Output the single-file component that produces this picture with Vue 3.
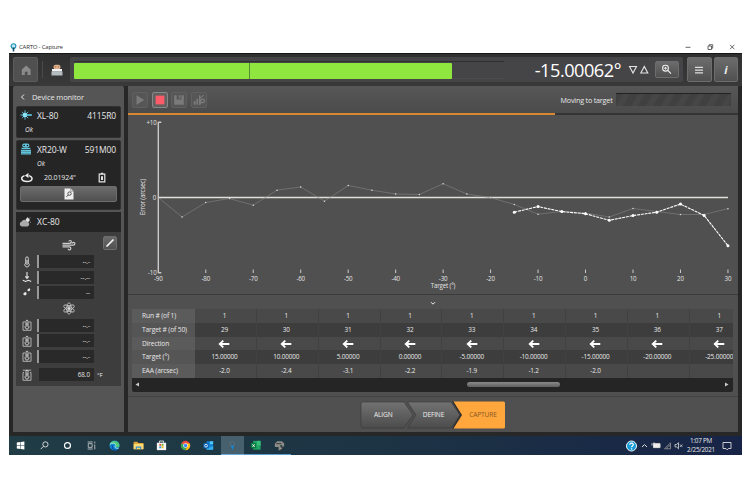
<template>
  <div class="screen">
    <!-- Window title bar -->
    <div class="titlebar">
      <svg class="pin" viewBox="0 0 8 10">
        <circle cx="4" cy="3.4" r="2.7" fill="#bfe9f5" stroke="#1b91b5" stroke-width="1.3" />
        <path d="M4 5v4.5" stroke="#164d66" stroke-width="1.8" />
      </svg>
      <span>CARTO - Capture</span>
      <svg class="win-controls" viewBox="0 0 60 12">
        <path d="M3.500 6.300h5M26 5h3.500v3.500H26zM27.200 5V3.700h3.500v3.500h-1.200M48 3.800l4.400 4.400M52.400 3.800L48 8.200" />
      </svg>
    </div>

    <div class="app">
      <!-- Header -->
      <div class="header">
        <div class="btn home">
          <svg viewBox="0 0 24 24"><path d="M7.800 11.500l4.400-4 4.400 4v5.600h-3v-3.400h-2.800v3.400h-3z" fill="#8a8a8a" /></svg>
        </div>
        <div class="divider"></div>
        <svg class="device-icon" viewBox="0 0 12 12">
          <rect x="2.500" y=".8" width="7" height="4.400" rx="2" fill="#dfb08a" />
          <circle cx="4.500" cy="2.800" r=".8" fill="#a57c60" />
          <circle cx="7.500" cy="2.800" r=".8" fill="#a57c60" />
          <rect x="1" y="5" width="10" height="2.600" fill="#f2f2f2" />
          <rect x=".5" y="7.500" width="11" height="4" fill="#b4bcc0" />
        </svg>
        <div class="signal">
          <div class="track">
            <div class="level"><i></i></div>
          </div>
          <span class="reading">-15.00062°</span>
          <svg class="triangles" viewBox="0 0 22 10">
            <path d="M1.500 1.500h7L5 8zM12.800 8h7L16.300 1.500z" />
          </svg>
          <div class="btn search">
            <svg viewBox="0 0 23 17">
              <circle cx="10.500" cy="7.200" r="2.900" />
              <path d="M12.800 9.500l3.200 3.200M9.200 7.200h2.600M10.500 5.900v2.600" />
            </svg>
          </div>
        </div>
        <div class="btn menu"><svg viewBox="0 0 24 24"><path d="M8 9.300h8M8 12.100h8M8 14.900h8" stroke="#ddd" stroke-width="1.300" /></svg></div>
        <div class="btn info">i</div>
      </div>

      <div class="body">
        <!-- Device monitor -->
        <aside class="sidebar">
          <div class="side-title">
            <svg viewBox="0 0 5 8"><path d="M4 1.500L1.500 4 4 6.500" /></svg>
            <span>Device monitor</span>
          </div>

          <div class="card laser">
            <div class="card-row">
              <svg viewBox="0 0 12 12">
                <path d="M5 1.300v9.400M.4 6h11M1.900 2.800l6.300 6.400M8.200 2.800L1.900 9.200" stroke="#5fcbe4" stroke-width=".9" />
                <circle cx="5" cy="6" r="2.300" fill="#8ee4f5" />
                <path d="M6 6h6" stroke="#5fcbe4" stroke-width="1.300" />
              </svg>
              <b>XL-80</b><b class="serial">4115R0</b>
            </div>
            <em>Ok</em>
          </div>

          <div class="card rotary">
            <div class="card-row">
              <svg viewBox="0 0 12 12">
                <rect x="2.200" y=".6" width="7.200" height="3.800" rx="1.800" fill="#60c5dc" />
                <circle cx="4.200" cy="2.500" r=".8" fill="#222" /><circle cx="7.500" cy="2.500" r=".8" fill="#222" />
                <path d="M1.500 5.400h8.800M1 7.500h10M1 9.200h10M1 10.900h10" stroke="#60c5dc" stroke-width="1.400" />
              </svg>
              <b>XR20-W</b><b class="serial">591M00</b>
            </div>
            <em>Ok</em>
            <div class="angle">
              <svg viewBox="0 0 12 10"><path d="M3.500 2.600C-.8 4-.2 8.500 6 8.500S12.300 4 8 2.600" fill="none" stroke="#eee" stroke-width="1.500" /><path d="M7.500 0v5L3.800 2.500z" fill="#eee" /></svg>
              <span>20.01924"</span>
              <svg class="battery" viewBox="0 0 8 11"><path d="M1.200 2.200h5.600v7.700H1.200zM2.800 1.300h2.400" fill="none" stroke="#e5e5e5" stroke-width="1.200" /><path d="M3 4.200h2v3.800H3z" fill="#e5e5e5" /></svg>
            </div>
            <div class="btn detail">
              <svg viewBox="0 0 10 12"><path d="M.5.500h6.200l2.800 2.800v8.200h-9z" fill="#efefef" /><path d="M6.700.5v2.800h2.800" stroke="#777" stroke-width=".6" fill="none" /><circle cx="5.500" cy="5.600" r="1.700" fill="none" stroke="#444" stroke-width=".9" /><path d="M4.400 6.800L2.500 8.800" stroke="#444" /></svg>
            </div>
          </div>

          <div class="env">
            <div class="env-title">
              <svg viewBox="0 0 12 10"><circle cx="8.700" cy="3" r="2" fill="#e5e5e5" /><path d="M11.200.5l-.8.800M11 5l.8.500M8.500 0v.8" stroke="#ddd" stroke-width=".7" /><path d="M3 9.500a2.600 2.600 0 0 1-.3-5.100 3 3 0 0 1 5.500.4A2.400 2.400 0 0 1 8.500 9.500z" fill="#aaa" /></svg>
              <b>XC-80</b>
            </div>
            <div class="env-body">
              <div class="air">
                <svg viewBox="0 0 14 12" fill="none" stroke="#ccc">
                  <path d="M.5 4.300h7.300c2 0 2-2.800.3-2.800-.8 0-1.200.5-1.200 1.100M.5 6.100h10.700c2.200 0 2.200-2.800.2-2.800-.9 0-1.200.5-1.200 1.100M.5 7.900h6.800c2 0 2 2.900.2 2.900-.8 0-1.200-.5-1.200-1.100" stroke-width="1.200" />
                </svg>
                <div class="btn edit"><svg viewBox="0 0 14 12"><path d="M3.500 9.500l7-7" stroke="#f5f5f5" stroke-width="1.700" /></svg></div>
              </div>
              <div v-for="s in airSensors" :key="s.icon" class="sensor">
                <svg viewBox="0 0 10 12">
                  <g v-if="s.icon === 'temp'" fill="none" stroke="#ccc"><path d="M3.700 7V2.200a1.300 1.300 0 0 1 2.600 0V7a2.200 2.200 0 1 1-2.600 0z" stroke-width="1" /><path d="M5 4v5" stroke-width="1.200" /></g>
                  <g v-else-if="s.icon === 'press'" fill="none" stroke="#e4e4e4"><path d="M5 1v6M3.300 5.300L5 7.300l1.700-2M.8 9.400c1.500 0 1.500 1 2.800 1s1.500-1 2.800-1 1.500 1 2.800 1" stroke-width="1.100" /></g>
                  <g v-else fill="#e6e6e6"><path d="M7.800 2.200c1.200 2.200-.5 3.500-1.800 2.800-1.400-1 0-2.500 1.800-2.800zM4 5.900c1.600 2.500-.4 4-1.900 3.200C.4 8 1.900 6.200 4 5.900z" /></g>
                </svg>
                <div class="value marked">{{ s.value }}</div>
              </div>
              <div class="material">
                <svg viewBox="0 0 14 13" fill="none" stroke="#ccc" stroke-width=".8">
                  <ellipse cx="7" cy="6.500" rx="2.300" ry="5.700" />
                  <ellipse cx="7" cy="6.500" rx="2.300" ry="5.900" transform="rotate(60 7 6.500)" />
                  <ellipse cx="7" cy="6.500" rx="2.300" ry="5.900" transform="rotate(-60 7 6.500)" />
                  <circle cx="7" cy="6.500" r="1.300" fill="#ddd" />
                </svg>
              </div>
              <div v-for="n in 4" :key="n" class="sensor" :class="{ last: n === 4 }">
                <svg viewBox="0 0 10 12" fill="none" stroke="#bbb">
                  <path v-if="n < 4" d="M3 3H1v8.300h8V3H7" stroke-width=".9" />
                  <path v-else d="M.8 1.200h8.400M2 3.500H1v7.800h8V3.500H8" stroke-width=".9" />
                  <path d="M4 6.500V2.200a1 1 0 0 1 2 0v4.300a1.900 1.900 0 1 1-2 0z" stroke="#ddd" stroke-width=".9" />
                  <path d="M5 4v4" stroke="#ddd" stroke-width=".8" />
                </svg>
                <div class="value" :class="{ marked: n < 4 }">{{ n < 4 ? '--.-' : '68.0' }}</div>
                <span v-if="n === 4" class="unit">°F</span>
              </div>
            </div>
          </div>
        </aside>

        <!-- Capture area -->
        <main class="main">
          <div class="toolbar">
            <div class="tool"><svg viewBox="0 0 16 16"><path d="M4 2.500v11L13 8z" fill="#7a7a7a" /></svg></div>
            <div class="tool stop"><svg viewBox="0 0 16 16"><rect x="3" y="3" width="10" height="10" fill="#ff5c69" /></svg></div>
            <div class="tool"><svg viewBox="0 0 16 16"><path d="M2.500 2.500h2.800v5h5.400v-5h2.800v11h-11z" fill="#7a7a7a" /><path d="M7.800 2.500h1.800v3.600H7.800z" fill="#7a7a7a" /></svg></div>
            <div class="tool"><svg viewBox="0 0 16 16"><path d="M2 9h2v4.500H2zM5 6.500h2v7H5zM8 2.500h1.500v11H8z" fill="#7a7a7a" /><circle cx="12" cy="9" r="2.100" fill="none" stroke="#858585" stroke-width="1.300" /><path d="M10.600 10.700l-1.800 2.800M9 5.500l4.500-3" stroke="#858585" /></svg></div>
            <span class="state">Moving to target</span>
            <div class="busy"></div>
          </div>
          <div class="progress"><div :style="{ width: progress + '%' }"></div></div>

          <svg class="chart" viewBox="128 115 610 179">
            <g class="ticks">
              <path v-for="t in ticks" :key="t" :d="`M${xPos(t)} 269.500v3.500`" />
            </g>
            <path d="M158.300 122v151M158.300 122.300h3M158.300 272.700h3" class="axis" />
            <path d="M158 197.500h570" class="zero" />
            <polyline :points="toPoints(previous)" class="previous" />
            <circle v-for="(p, i) in previous.slice(1)" :key="'p' + i" :cx="xPos(p[0])" :cy="p[1]" r=".75" fill="#ddd" />
            <polyline :points="toPoints(current)" class="current" />
            <circle v-for="p in current" :key="'c' + p[0]" :cx="xPos(p[0])" :cy="p[1]" r="1.500" fill="#fff" />
            <g class="labels">
              <text v-for="t in [-90, ...ticks]" :key="t" :x="xPos(t)" y="281.300" text-anchor="middle">{{ t }}</text>
              <text x="156.500" y="124.600" text-anchor="end">+10</text>
              <text x="156" y="199.900" text-anchor="end">0</text>
              <text x="156.500" y="275.400" text-anchor="end">-10</text>
              <text x="443" y="287.900" text-anchor="middle">Target (°)</text>
              <text transform="translate(145 197) rotate(-90)" text-anchor="middle">Error (arcsec)</text>
            </g>
          </svg>

          <div class="results">
            <div class="collapse"><svg viewBox="0 0 6 5"><path d="M1 1.200l2 2 2-2" /></svg></div>
            <div class="table">
              <div v-for="row in rows" :key="row.label" class="row">
                <div class="label">{{ row.label }}</div>
                <div v-for="(cell, i) in row.cells" :key="i" class="cell">
                  <svg v-if="cell === 'left'" viewBox="0 0 12 8"><path d="M11.300 4H2M5.300.6L1.700 4l3.600 3.400" /></svg>
                  <template v-else>{{ cell }}</template>
                </div>
              </div>
            </div>
            <div class="scrollbar">
              <svg viewBox="0 0 4 5"><path d="M4 .5v4L.5 2.500z" /></svg>
              <div class="thumb"></div>
              <svg viewBox="0 0 4 5"><path d="M0 .5v4l3.500-2z" /></svg>
            </div>
          </div>

          <div class="steps">
            <svg viewBox="0 0 146 28">
              <defs>
                <linearGradient id="stepFill" x1="0" y1="0" x2="0" y2="1">
                  <stop offset="0" stop-color="#727272" /><stop offset="1" stop-color="#4c4c4c" />
                </linearGradient>
              </defs>
              <path d="M3 1h41l9 13-9 13H3a2 2 0 0 1-2-2V3a2 2 0 0 1 2-2z" fill="url(#stepFill)" stroke="#383838" stroke-width=".6" />
              <path d="M47.500 1H91l9 13-9 13H47.500l8.500-13z" fill="url(#stepFill)" stroke="#383838" stroke-width=".6" />
              <path d="M92 .500h2l9 13.500-9 13.500h-2l8-13.500z" fill="#303030" />
              <path d="M93.500.500h50a1.500 1.500 0 0 1 1.500 1.500v24a1.500 1.500 0 0 1-1.500 1.500h-50l8.500-13.500z" fill="#ffa63c" />
              <text x="23.300" y="16.400">ALIGN</text>
              <text x="73.500" y="16.400">DEFINE</text>
              <text x="123" y="16.400" class="on">CAPTURE</text>
            </svg>
          </div>
        </main>
      </div>
    </div>

    <!-- Windows taskbar -->
    <div class="taskbar">
      <div class="task"><svg viewBox="0 0 14 14"><path d="M3 3.700l3.700-.5v3.500H3zM7.200 3.100l4-.5v4.100h-4zM3 7.200h3.700v3.500L3 10.200zM7.200 7.200h4v4.100l-4-.5z" fill="#fff" /></svg></div>
      <div class="task"><svg viewBox="0 0 14 14" fill="none" stroke="#ddd" stroke-width="1"><circle cx="8" cy="5.800" r="2.800" /><path d="M6 7.800L3 10.900" /></svg></div>
      <div class="task"><svg viewBox="0 0 14 14"><circle cx="7" cy="7" r="3.200" fill="none" stroke="#fff" stroke-width="1.300" /></svg></div>
      <div class="task"><svg viewBox="0 0 14 14" fill="none" stroke="#ccc" stroke-width=".9"><path d="M3.500 5h4.200v4H3.500zM2.800 3.200h5.500M2.800 10.800h5.500M10.500 2.800v2M10.500 6v5.200" /></svg></div>
      <div class="task"><svg viewBox="0 0 14 14"><circle cx="7" cy="7" r="5.400" fill="#1687d2" /><path d="M1.700 6.500A5.400 5.400 0 0 1 12.400 7.500c-.3 2-3.900 2-4.400.5.900-1.500-.5-3-2.400-3S2.500 5.400 1.700 6.500z" fill="#4fc977" /><path d="M2.300 5.800C4 3.900 8 4 8.500 7L7.300 8.500C8 10 10 10.500 11.500 10" fill="none" stroke="#b7efff" stroke-width=".8" /><path d="M4.700 7c-.5 3 1.500 5 4.300 5" fill="none" stroke="#0b50a5" stroke-width="1.500" /></svg></div>
      <div class="task"><svg viewBox="0 0 14 14"><path d="M1.800 3h4l1 1.200h5.500V11H1.800z" fill="#dca134" /><path d="M1.800 5.200h10.500V11H1.800z" fill="#ffdc72" /><path d="M4 8h6v3H8.700V9.300H5.300V11H4z" fill="#3d8fc9" /></svg></div>
      <div class="task"><svg viewBox="0 0 14 14"><path d="M4.800 4V2.200h4.400V4" fill="none" stroke="#eee" /><path d="M2 4h10v8H2z" fill="#f7f7f7" /><path d="M4.700 5.300h2v2h-2z" fill="#e94f2e" /><path d="M7.200 5.300h2v2h-2z" fill="#70b52b" /><path d="M4.700 7.900h2v2h-2z" fill="#259de0" /><path d="M7.200 7.900h2v2h-2z" fill="#f6b719" /></svg></div>
      <div class="task"><svg viewBox="0 0 14 14"><circle cx="7" cy="7" r="5" fill="#e94a3c" /><path d="M2.700 4.500A5 5 0 0 0 7 12l2.300-4.400L7 7z" fill="#35a853" /><path d="M7 12a5 5 0 0 0 4.500-7.200H7L9.300 8z" fill="#fbc116" /><circle cx="7" cy="7" r="2.500" fill="#fff" /><circle cx="7" cy="7" r="1.900" fill="#4285f4" /></svg></div>
      <div class="task"><svg viewBox="0 0 14 14"><path d="M5 2.500h7v9H5z" fill="#1483d6" /><path d="M8.500 2.500H12v3H8.500z" fill="#50c7f5" /><path d="M5 7.500l3.500 2L12 7.500v4H5z" fill="#35b2ee" /><path d="M1.500 4.300h5.800v5.800H1.500z" fill="#0862b4" /><circle cx="4.400" cy="7.200" r="1.500" fill="none" stroke="#fff" stroke-width=".9" /></svg></div>
      <div class="task active"><svg viewBox="0 0 14 14"><circle cx="7" cy="5" r="2.300" fill="#465e6c" stroke="#607987" stroke-width=".7" /><path d="M5.200 7.200h3.600L7 12z" fill="#1387d4" /></svg></div>
      <div class="task open"><svg viewBox="0 0 14 14"><path d="M4.500 2h8v9.500h-8z" fill="#20a464" /><path d="M8.500 2h4v5h-4z" fill="#38bd79" /><path d="M2 4.200h5.800V10H2z" fill="#087a40" /><path d="M3.700 5.600l2.400 3M6.100 5.600l-2.400 3" stroke="#fff" stroke-width=".9" /></svg></div>
      <div class="task open"><svg viewBox="0 0 14 14"><path d="M2 5l2.500-2.500h5L12 4.500V8H9.500V6.500H8V12H6V8.500H2z" fill="#8b8b88" /><path d="M3.500 5h5.500M9.500 9.500h2" stroke="#363636" stroke-width="1" /><circle cx="8.500" cy="10" r="1" fill="#b49d86" /></svg></div>

      <svg class="tray" viewBox="0 0 58 16" fill="none" stroke="#ddd">
        <circle cx="6.500" cy="8" r="5" fill="#169bd8" stroke="#f3f9fc" stroke-width="1" />
        <path d="M4.800 6.700c0-2.300 3.500-2 3.500 0 0 1.200-1.700 1.200-1.700 2.500M6.600 10.200v1.200" stroke="#fff" stroke-width="1.200" />
        <path d="M17 9l2.500-2.400L22 9" />
        <path d="M28.500 5.700h6.500v3.900h-6.500z" fill="#eee" /><path d="M27 5.200v2.400M29 4.300v2" stroke-width=".9" />
        <path d="M39.500 10.800l6-6v6zM42 10.700c0-1.300.8-2.800 3.300-3" stroke="#999" stroke-width=".8" />
        <path d="M50 6.500h1.500l2-1.800v6l-2-1.800H50zM55 6.500l2.300 2.400M57.300 6.500L55 8.900" stroke-width=".8" />
      </svg>
      <div class="clock"><span>1:07 PM</span><span>2/25/2021</span></div>
      <svg class="notice" viewBox="0 0 10 10"><path d="M1 1.500h8v6H6.500L5.200 8.900 4 7.500H1z" fill="none" stroke="#ddd" stroke-width=".9" /></svg>
    </div>
  </div>
</template>

<script setup>
import { computed } from 'vue'

const airSensors = [
  { icon: 'temp', value: '--.-' },
  { icon: 'press', value: '--.--' },
  { icon: 'humid', value: '--' }
]

// part of the run already captured
const progress = 70

const ticks = [-80, -70, -60, -50, -40, -30, -20, -10, 0, 10, 20, 30]

// [target angle, y on the plot]
const previous = [
  [-90, 197.5], [-85, 217], [-80, 202.5], [-75, 198.5], [-70, 205.2],
  [-65, 190.2], [-60, 187], [-55, 201.2], [-50, 185.5], [-45, 190.2],
  [-40, 194], [-35, 194.5], [-30, 183.7], [-25, 194], [-20, 197.6],
  [-15, 204.5], [-10, 214.2], [-5, 211.5], [0, 213], [5, 217],
  [10, 208.5], [15, 211.5], [20, 214.5], [25, 214.5], [30, 208.7]
]
const current = [
  [-15, 212.2], [-10, 206.6], [-5, 211.6], [0, 213.7], [5, 220.3],
  [10, 215.6], [15, 212.2], [20, 204.1], [25, 215.5], [30, 245.7]
]

const xPos = (deg) => 158.3 + (deg + 90) * 4.747
const toPoints = (series) => series.map(([deg, y]) => `${xPos(deg)},${y}`).join(' ')

const eaa = ['-2.0', '-2.4', '-3.1', '-2.2', '-1.9', '-1.2', '-2.0', '', '']
const rows = computed(() => [
  { label: 'Run # (of 1)', cells: eaa.map(() => 1) },
  { label: 'Target # (of 50)', cells: eaa.map((_, i) => 29 + i) },
  { label: 'Direction', cells: eaa.map(() => 'left') },
  { label: 'Target (°)', cells: eaa.map((_, i) => (15 - i * 5).toFixed(5)) },
  { label: 'EAA (arcsec)', cells: eaa }
])
</script>

<style>
body {
  background: #fff;
}
</style>

<style scoped>
* {
  box-sizing: border-box;
}

.screen {
  width: 750px;
  height: 500px;
  padding: 41px 8px 0 9px;
  overflow: hidden;
  font-family: 'Open Sans', 'Noto Sans', sans-serif;
  font-size: 7px;
  color: #e8e8e8;
}

svg {
  display: block;
  fill: none;
  flex-shrink: 0;
}

b {
  font-weight: 400;
}

.titlebar {
  height: 12px;
  display: flex;
  align-items: center;
  padding-left: 1px;
  color: #333;
  font-size: 6px;
  letter-spacing: -0.2px;
}

.pin {
  width: 7px;
  height: 9px;
  margin-right: 2px;
}

.win-controls {
  width: 60px;
  height: 12px;
  margin-left: auto;
  stroke: #444;
  stroke-width: 0.8;
}

.app {
  height: 383px;
  background: #272727;
  border-top: 1px solid #171717;
  display: flex;
  flex-direction: column;
}

.header {
  height: 32px;
  padding: 3px 4px 4px;
  display: flex;
  align-items: center;
  background: linear-gradient(#303030, #393939);
}

.btn {
  display: flex;
  align-items: center;
  justify-content: center;
  border: 1px solid #6d6d6d;
  border-radius: 2px;
  background: linear-gradient(#6c6c6c, #505050);
}

.home,
.menu,
.info {
  width: 25px;
  height: 25px;
}

.home {
  background: #505050;
  border-color: #5c5c5c;
}

.home svg,
.menu svg {
  width: 24px;
  height: 24px;
}

.divider {
  width: 1px;
  height: 17px;
  margin: 0 8px 0 4px;
  background: #4a4a4a;
}

.device-icon {
  width: 12px;
  height: 12px;
}

.signal {
  width: 613px;
  height: 25px;
  margin: 0 4px 0 7px;
  padding: 0 4px;
  display: flex;
  align-items: center;
  background: #454447;
  border-radius: 2px;
}

.track {
  width: 430px;
  height: 18px;
  padding-top: 1px;
  border-top: 1px solid #303030;
  border-bottom: 1px solid #4c4c4c;
}

.level {
  width: 378px;
  height: 16px;
  background: #8ee63e;
  border-radius: 1px;
}

.level i {
  display: block;
  width: 1px;
  height: 16px;
  margin-left: 175px;
  background: #598a38;
}

.reading {
  width: 91px;
  margin-left: 26px;
  font-size: 18.2px;
  line-height: 24px;
  letter-spacing: -0.5px;
  text-align: right;
  color: #fff;
}

.triangles {
  width: 22px;
  height: 10px;
  margin-left: 7px;
  stroke: #e4e4e4;
  stroke-width: 1.1;
}

.search {
  width: 24px;
  height: 17px;
  margin-left: 5px;
}

.search svg {
  width: 23px;
  height: 17px;
  stroke: #eee;
  stroke-width: 1.1;
}

.info {
  margin-left: 2px;
  font: italic bold 11px 'Open Sans', sans-serif;
  color: #eee;
}

.body {
  flex: 1;
  min-height: 0;
  display: flex;
  gap: 4px;
  padding: 0 4px 4px;
}

.sidebar {
  width: 111px;
  padding: 0 3px;
  background: #555;
  border-radius: 2px 2px 0 0;
}

.side-title {
  height: 20px;
  padding: 1px 0 0 4px;
  display: flex;
  align-items: center;
  gap: 7px;
  font-size: 7.5px;
  letter-spacing: -0.1px;
}

.side-title svg {
  width: 5px;
  height: 8px;
  stroke: #eee;
}

.card {
  margin-bottom: 2px;
  padding: 2px 4px 0;
  background: #252525;
  border: 1px solid #303030;
  border-radius: 2px;
}

.card-row {
  height: 12px;
  display: flex;
  align-items: center;
  font-size: 8.5px;
  letter-spacing: -0.12px;
}

.card-row svg {
  width: 12px;
  height: 12px;
  margin: 0 5px 0 -1px;
}

.serial {
  margin-left: auto;
}

.card em {
  display: block;
  margin-top: 3px;
  padding-left: 4px;
  font-size: 6.5px;
  line-height: 11px;
}

.laser {
  height: 32px;
}

.rotary {
  height: 70px;
}

.rotary em {
  padding-left: 16px;
}

.angle {
  height: 15px;
  margin-top: 1px;
  display: flex;
  align-items: center;
  font-size: 7px;
  letter-spacing: -0.1px;
}

.angle svg {
  width: 12px;
  height: 10px;
}

.angle span {
  width: 36px;
  margin-left: 11px;
}

.angle .battery {
  width: 8px;
  height: 11px;
  margin-left: 18px;
}

.detail {
  width: 97px;
  height: 16px;
  margin-left: -1px;
  margin-top: 1px;
}

.detail svg {
  width: 10px;
  height: 12px;
}

.env {
  height: 174px;
  background: #3d3d3d;
}

.env-title {
  height: 20px;
  padding: 0 3px;
  display: flex;
  align-items: center;
  gap: 6px;
  background: #252525;
  font-size: 8.5px;
  line-height: 18px;
}

.env-title svg {
  width: 12px;
  height: 10px;
}

.env-body {
  padding: 3px 4px 0 6px;
}

.air {
  height: 19px;
  display: flex;
  align-items: center;
  padding-left: 40px;
}

.air svg {
  width: 14px;
  height: 12px;
}

.edit {
  width: 14px;
  height: 14px;
  margin: -4px 0 0 27px;
}

.sensor {
  height: 15.4px;
  display: flex;
  align-items: center;
}

.sensor svg {
  width: 10px;
  height: 12px;
  margin-right: 5px;
}

.value {
  width: 57px;
  height: 13px;
  padding-right: 4px;
  font-size: 6.2px;
  line-height: 13px;
  text-align: right;
  background: #292929;
  border-left: 2px solid #3d3d3d;
}

.marked {
  border-color: #999;
}

.material {
  height: 17.5px;
  padding-left: 40px;
  display: flex;
  align-items: center;
}

.material svg {
  width: 14px;
  height: 13px;
}

.last {
  margin-top: 3px;
}

.unit {
  margin-left: 3px;
  font-size: 6px;
}

.main {
  width: 610px;
  display: flex;
  flex-direction: column;
  background: #505050;
  border-radius: 2px 2px 0 0;
}

.toolbar {
  height: 27px;
  padding: 0 7px 0 4px;
  display: flex;
  align-items: center;
  gap: 3.5px;
  background: linear-gradient(#575757, #4b4b4b);
}

.tool {
  width: 16px;
  height: 16px;
  border: 1px solid #606060;
  border-radius: 2px;
  background: #565656;
}

.tool svg {
  width: 14px;
  height: 14px;
}

.stop {
  border-color: #888;
  background: #616161;
}

.state {
  margin-left: auto;
  font-size: 7.2px;
  letter-spacing: -0.2px;
}

.busy {
  width: 115px;
  height: 13px;
  border-top: 1px solid #222;
  background: repeating-linear-gradient(120deg, #404040 0 5px, #464646 7px 11px, #404040 13px);
}

.progress {
  height: 2px;
  background: #343434;
}

.progress div {
  height: 1.5px;
  background: #d8892f;
}

.chart {
  width: 610px;
  height: 180px;
  border-bottom: 1px solid #3b3b3b;
}

.ticks {
  stroke: #ccc;
  stroke-width: 1;
}

.axis {
  stroke: #c9c9c9;
  stroke-width: 1.4;
}

.zero {
  stroke: #e0e0dc;
  stroke-width: 1.4;
}

.previous {
  stroke: #858585;
  stroke-width: 0.6;
}

.current {
  stroke: #fff;
  stroke-width: 1.1;
  stroke-dasharray: 3 0.8;
}

.labels text {
  fill: #e4e4e4;
  font-size: 6.2px;
  letter-spacing: -0.18px;
}

.results {
  height: 102px;
  padding: 0 5px 0 4px;
  border-bottom: 1px solid #424242;
}

.collapse {
  height: 14px;
  padding-top: 2px;
  display: flex;
  align-items: center;
  justify-content: center;
}

.collapse svg {
  width: 6px;
  height: 5px;
  stroke: #eee;
}

.table {
  overflow: hidden;
}

.row {
  height: 13.8px;
  display: flex;
  background: #494949;
}

.row:nth-child(even) {
  background: #3d3d3d;
}

.label {
  flex: 0 0 63px;
  padding-left: 10px;
  font-size: 6.7px;
  line-height: 14px;
  letter-spacing: -0.15px;
  white-space: nowrap;
  background: #5b5b5b;
}

.row:nth-child(even) .label {
  background: #555;
}

.cell {
  flex: 0 0 61.85px;
  display: flex;
  align-items: center;
  justify-content: center;
  padding-right: 2px;
  border-right: 1px solid #414141;
  font-size: 6.4px;
  line-height: 12px;
  letter-spacing: -0.15px;
}

.cell svg {
  width: 12px;
  height: 8px;
  margin-top: 2px;
  stroke: #fff;
  stroke-width: 1.8;
}

.scrollbar {
  height: 14px;
  padding: 0 4px 0 3px;
  display: flex;
  align-items: center;
  background: #252525;
  border-radius: 0 0 2px 2px;
}

.scrollbar svg {
  width: 4px;
  height: 5px;
  fill: #ccc;
}

.thumb {
  width: 93px;
  height: 5px;
  margin: 0 auto 0 328px;
  border-radius: 3px;
  background: linear-gradient(#8a8a8a, #606060);
}

.steps {
  flex: 1;
  display: flex;
  align-items: center;
  justify-content: center;
}

.steps svg {
  width: 146px;
  height: 28px;
}

.steps text {
  font-size: 6.6px;
  letter-spacing: -0.15px;
  text-anchor: middle;
  fill: #eee;
}

.steps .on {
  fill: #875b27;
}

.taskbar {
  height: 19px;
  display: flex;
  align-items: center;
  background: linear-gradient(90deg, #203c45, #1d3444 50%, #172447);
}

.task {
  width: 23.5px;
  height: 19px;
  display: flex;
  align-items: center;
  justify-content: center;
  border-bottom: 1px solid transparent;
}

.task svg {
  width: 13px;
  height: 13px;
}

.active {
  background: #46606d;
  border-color: #6baad9;
}

.open {
  border-color: #579ed3;
}

.tray {
  width: 58px;
  height: 16px;
  margin-left: auto;
}

.clock {
  width: 34px;
  margin-left: 1px;
  display: flex;
  flex-direction: column;
  align-items: center;
  font-size: 6.3px;
  line-height: 8.5px;
  letter-spacing: -0.22px;
}

.notice {
  width: 10px;
  height: 10px;
  margin: 0 10px 0 4px;
}
</style>
